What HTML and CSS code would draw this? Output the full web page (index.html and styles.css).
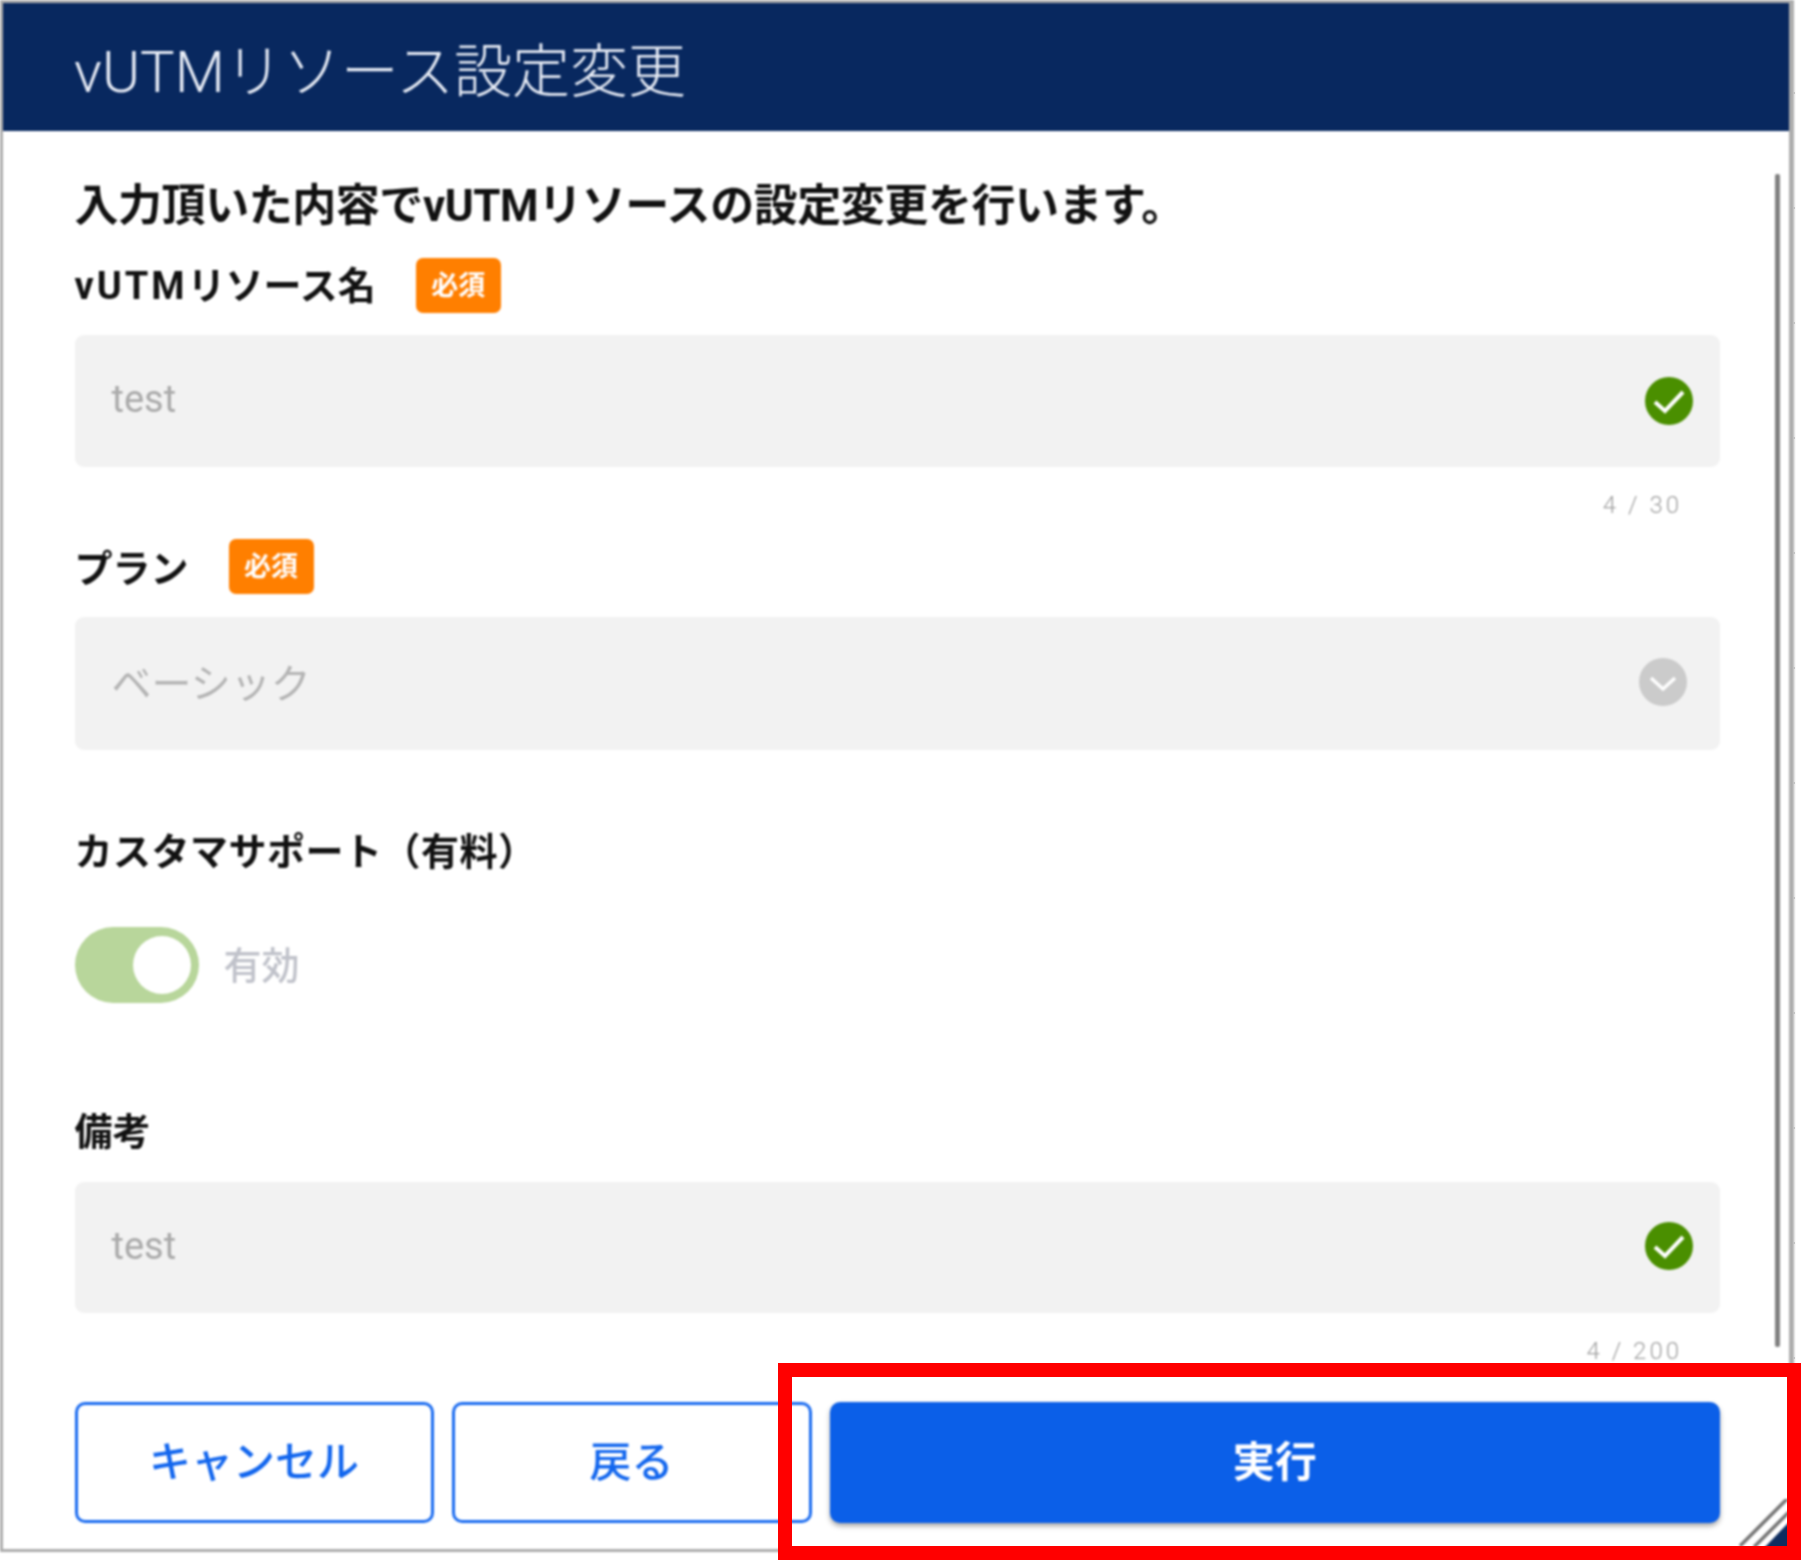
FILE: index.html
```html
<!DOCTYPE html>
<html lang="ja">
<head>
<meta charset="utf-8">
<title>vUTMリソース設定変更</title>
<link rel="stylesheet" href="styles.css">
</head>
<body>
<div class="stage">
  <section class="dialog">
    <header class="dialog-head">vUTMリソース設定変更</header>
    <div class="dialog-body">
      <p class="lead">入力頂いた内容でvUTMリソースの設定変更を行います。</p>

      <div class="label-row first">
        <span class="label"><span class="latin">vUTM</span>リソース名</span><span class="badge">必須</span>
      </div>
      <div class="field">
        <span class="field-text">test</span>
        <svg class="status" viewBox="0 0 48 48"><circle cx="24" cy="24" r="24" fill="#4a8f00"/><path d="M10 25l10 9 18-19" fill="none" stroke="#fff" stroke-width="4"/></svg>
      </div>
      <div class="counter">4 / 30</div>

      <div class="label-row second">
        <span class="label">プラン</span><span class="badge">必須</span>
      </div>
      <div class="field select">
        <span class="field-text jp">ベーシック</span>
        <svg class="status" viewBox="0 0 48 48"><circle cx="24" cy="24" r="24" fill="#cbcbcb"/><path d="M12 20l12 11 12-11" fill="none" stroke="#fff" stroke-width="3.4"/></svg>
      </div>

      <div class="label-row third"><span class="label">カスタマサポート（有料）</span></div>
      <div class="toggle-row">
        <span class="toggle"><span class="knob"></span></span>
        <span class="toggle-text">有効</span>
      </div>

      <div class="label-row fourth"><span class="label">備考</span></div>
      <div class="field note">
        <span class="field-text">test</span>
        <svg class="status" viewBox="0 0 48 48"><circle cx="24" cy="24" r="24" fill="#4a8f00"/><path d="M10 25l10 9 18-19" fill="none" stroke="#fff" stroke-width="4"/></svg>
      </div>
      <div class="counter wide">4 / 200</div>

      <div class="actions">
        <button class="btn outline" type="button">キャンセル</button>
        <button class="btn outline" type="button">戻る</button>
        <button class="btn primary" type="button">実行</button>
      </div>
    </div>
    <div class="scrollbar"></div>
    <svg class="grip" viewBox="0 0 50 50"><path d="M50 -2L1 47M50 13L15 48" stroke="#777" stroke-width="3.6" fill="none"/><path d="M50 23V50H24Z" fill="#0e2d5f"/></svg>
  </section>
  <div class="ticks"></div>
  <div class="highlight"></div>
</div>
</body>
</html>
```
FILE: styles.css
```css
* { box-sizing: border-box; }
html, body { margin: 0; padding: 0; background: #fff; }
body { font-family: Roboto, "Noto Sans CJK JP", sans-serif; color: #111; }
.stage { position: relative; width: 1801px; height: 1560px; overflow: hidden; }
.dialog {
  position: relative; width: 1794px; height: 1552px;
  border: solid #adadad; border-width: 3px 5px 3px 3px;
  display: flex; flex-direction: column; background: #fff;
  filter: blur(0.8px);
}
.dialog-head {
  height: 128px; flex: none; background: #08285f; color: #e6ebf5;
  font-size: 58px; font-weight: 300; line-height: 138px; padding-left: 71px; overflow: hidden;
}
.dialog-body { flex: 1; display: flex; flex-direction: column; padding: 50px 69px 0 71.5px; }
.lead { margin: 0; font-size: 44px; font-weight: 700; line-height: 50px; color: #111; white-space: nowrap; letter-spacing: -0.45px; }
.label-row { display: flex; align-items: center; gap: 40px; }
.label-row.first { margin-top: 27px; height: 55px; }
.label-row.second { margin-top: 19px; height: 55px; }
.label-row.second .label { padding-top: 4px; }
.label-row.third { margin-top: 80px; height: 40px; }
.label-row.third .label { padding-top: 4px; letter-spacing: 0.5px; }
.label-row.fourth { margin-top: 107px; height: 40px; }
.label-row.fourth .label { padding-top: 4px; }
.label { font-size: 38px; font-weight: 700; line-height: 40px; white-space: nowrap; }
.latin { letter-spacing: 3px; }
.badge {
  width: 85px; height: 55px; background: #ff7f00; border-radius: 7px; color: #fff;
  font-size: 27px; font-weight: 700; display: flex; align-items: center; justify-content: center; padding-bottom: 5px;
}
.field {
  height: 132px; margin-top: 22px; background: #f2f2f2; border-radius: 9px;
  display: flex; align-items: center; justify-content: space-between; padding: 0 27px 0 37px;
}
.field.select { height: 133px; margin-top: 23px; padding-right: 33px; }
.field.note { height: 131px; margin-top: 32px; }
.field-text { font-size: 38px; color: #aaa; font-weight: 400; padding-bottom: 4px; }
.field-text.jp { font-size: 40px; padding-bottom: 6px; color: #b4b4b4; }
.status { width: 48px; height: 48px; flex: none; }
.select .status { margin-bottom: 3px; }
.note .status { margin-bottom: 4px; }
.counter {
  margin-top: 23px; height: 30px; line-height: 30px; font-size: 24px; letter-spacing: 3px;
  color: #a0a0a0; text-align: right; padding-right: 38px; font-weight: 300;
}
.toggle-row { display: flex; align-items: center; gap: 25px; margin-top: 57px; height: 76px; }
.toggle { width: 124px; height: 76px; border-radius: 38px; background: #b8d69b; display: flex; align-items: center; justify-content: flex-end; padding-right: 8px; }
.knob { width: 58px; height: 58px; border-radius: 50%; background: #fff; }
.toggle-text { font-size: 38px; font-weight: 500; color: #c0c2ca; padding-bottom: 6px; }
.actions { display: grid; grid-template-columns: 359px 360px 1fr; gap: 18px; margin-top: 36px; }
.btn { height: 121px; border-radius: 10px; font: 700 42px Roboto, "Noto Sans CJK JP", sans-serif; padding: 0 0 8px; }
.btn.outline { background: #fff; border: 3px solid #1a6bf0; color: #1266ee; font-weight: 500; }
.btn.primary { background: #0b5fe8; border: 0; color: #fff; box-shadow: 0 3px 5px rgba(0,0,0,.35); }
.scrollbar { position: absolute; left: 1772px; top: 171px; width: 5px; height: 1173px; background: #808080; border-radius: 2px; }
.grip { position: absolute; right: 0; bottom: 0; width: 50px; height: 50px; overflow: hidden; }
.ticks { position: absolute; left: 1793px; top: 92px; width: 2px; height: 1270px; background: repeating-linear-gradient(to bottom, #c4c4c4 0 2px, transparent 2px 115px); }
.highlight { position: absolute; left: 778px; top: 1363px; width: 1023px; height: 197px; border: 14px solid #f00; }
```
